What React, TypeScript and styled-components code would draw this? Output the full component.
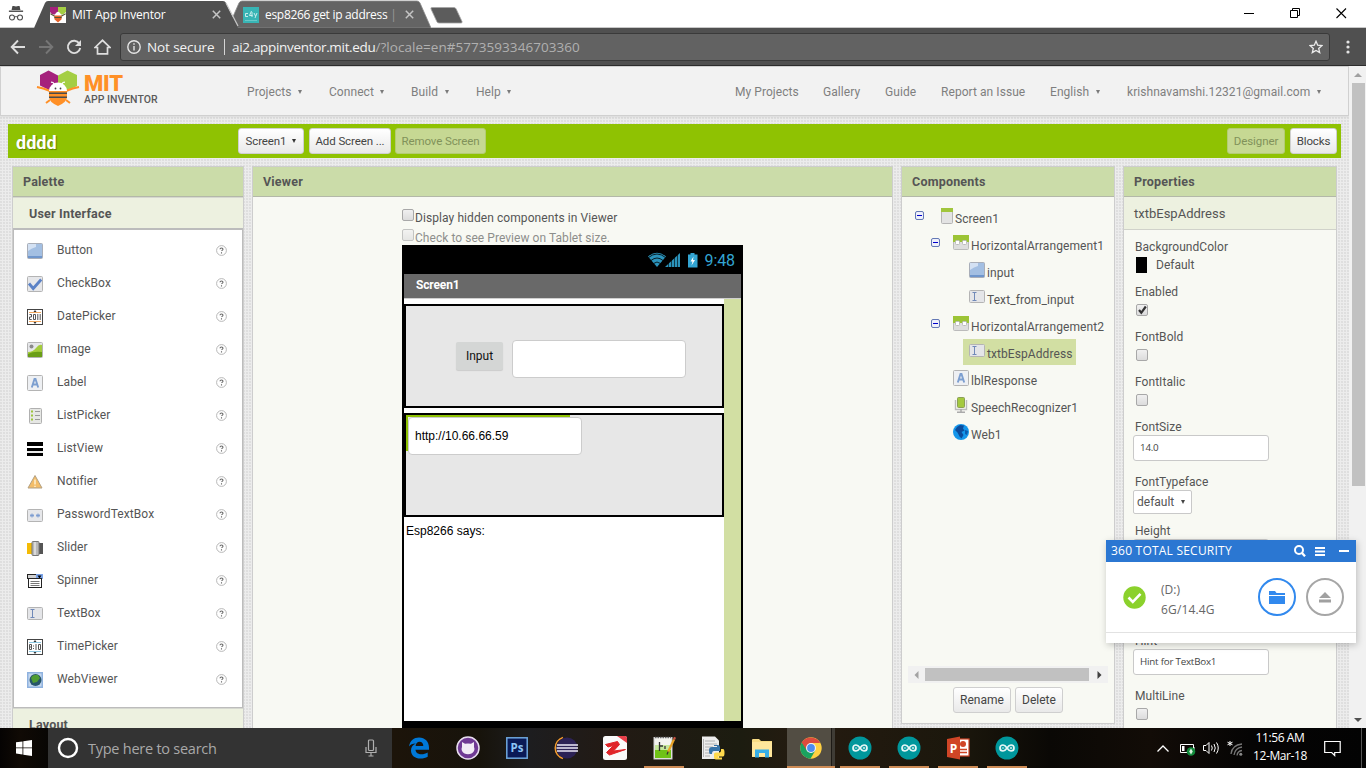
import React from "react";
import styled, { createGlobalStyle, css } from "styled-components";

const Global = createGlobalStyle`
  * { box-sizing: border-box; }
  html, body { margin: 0; padding: 0; overflow: hidden; }
  body { font-family: Roboto, "Liberation Sans", sans-serif; font-size: 12px; color: #555; }
`;

const SEGOE = `"Open Sans", "Noto Sans", sans-serif`;

/* ---------- shared ---------- */

const Screen = styled.div`
  width: 1366px;
  height: 768px;
  display: flex;
  flex-direction: column;
  overflow: hidden;
  position: relative;
  background: #fff;
`;

const Txt = styled.span<{ $ls?: number; $color?: string; $w?: number; $ml?: number; $grow?: boolean }>`
  white-space: nowrap;
  letter-spacing: ${(p) => p.$ls ?? 0}px;
  ${(p) => p.$color && css`color: ${p.$color};`}
  ${(p) => p.$w && css`width: ${p.$w}px;`}
  ${(p) => p.$ml && css`margin-left: ${p.$ml}px;`}
  ${(p) => p.$grow && css`flex: 1;`}
`;

const Glyph = styled.svg<{ $ml?: string; $mr?: number; $mt?: number }>`
  flex: none;
  margin-left: ${(p) => p.$ml ?? "0"};
  margin-right: ${(p) => p.$mr ?? 0}px;
  margin-top: ${(p) => p.$mt ?? 0}px;
`;

/* ---------- browser chrome ---------- */

const TabStrip = styled.div`
  height: 28px;
  flex: none;
  display: flex;
  background: #fff;
  position: relative;
  font-family: ${SEGOE};
`;

const TabShapes = styled.svg`
  position: absolute;
  left: 0;
  top: 0;
`;

const Incognito = styled.div`
  width: 34px;
  height: 28px;
  position: relative;
  display: flex;
  justify-content: center;
  padding: 3px 2px 0 0;
`;

const Tab = styled.div<{ $w: number; $pl: number }>`
  width: ${(p) => p.$w}px;
  padding-left: ${(p) => p.$pl}px;
  height: 28px;
  display: flex;
  align-items: center;
  position: relative;
  padding-top: 1px;
  color: #fff;
  font-size: 12px;
  svg { flex: none; }
`;

const TabTitle = styled.div<{ $w: number; $ls: number }>`
  width: ${(p) => p.$w}px;
  flex: none;
  margin-left: 6px;
  white-space: nowrap;
  overflow: hidden;
  letter-spacing: ${(p) => p.$ls}px;
  span { color: #9a9a9a; }
`;

const WindowButtons = styled.div`
  margin-left: auto;
  display: flex;
  gap: 35px;
  padding: 7px 19px 0 0;
  position: relative;
`;

const Toolbar = styled.div`
  height: 38px;
  flex: none;
  display: flex;
  align-items: center;
  background: #505050;
  border-bottom: 1px solid #2d2d2d;
  padding-left: 10px;
  font-family: ${SEGOE};
`;

const ToolIcons = styled.div`
  width: 110px;
  display: flex;
  gap: 12px;
`;

const Address = styled.div`
  width: 1210px;
  height: 28px;
  border: 1px solid #3a3a3a;
  border-radius: 3px;
  background: #626262;
  display: flex;
  align-items: center;
  padding: 0 6px 0 6px;
  color: #f3f3f3;
  font-size: 13.5px;
`;

const AddressSplit = styled.i`
  width: 1px;
  height: 16px;
  background: #d5d5d5;
  margin: 0 7px 0 0;
`;

/* ---------- page ---------- */

const Page = styled.div`
  height: 662px;
  flex: none;
  display: flex;
`;

const Canvas = styled.div`
  width: 1349px;
  display: flex;
  flex-direction: column;
  background-color: #ececec;
  background-image: radial-gradient(circle at 1px 1px, #dedede 0.7px, transparent 1px);
  background-size: 3px 3px;
`;

const Header = styled.div`
  height: 50px;
  flex: none;
  background: #f2f2f2;
  border: 1px solid #d0d0d0;
  display: flex;
  box-shadow: 0 1px 2px rgba(0, 0, 0, 0.08);
`;

const Brand = styled.div`
  width: 246px;
  padding: 2px 0 0 35px;
  display: flex;
`;

const BrandText = styled.div`
  display: flex;
  flex-direction: column;
  padding: 4px 0 0 4px;
  b {
    color: #ff9027;
    font-size: 22px;
    line-height: 21px;
    font-weight: 900;
    letter-spacing: -0.2px;
  }
  span {
    color: #5b5b5b;
    font-weight: 500;
    font-size: 10.5px;
    line-height: 12px;
    white-space: nowrap;
    letter-spacing: 0;
  }
`;

const Nav = styled.div<{ $cols: string }>`
  display: grid;
  grid-template-columns: ${(p) => p.$cols};
  align-items: center;
  color: #7f7f7f;
  font-size: 12px;
  padding-top: 1px;
`;

const NavItem = styled.div`
  display: flex;
  align-items: center;
  white-space: nowrap;
  letter-spacing: 0.06px;
`;

const Caret = styled.i<{ $ml?: number; $c?: string }>`
  border: 2.5px solid transparent;
  border-top: 4px solid ${(p) => p.$c ?? "#7a7a7a"};
  border-bottom: 0;
  margin-left: ${(p) => p.$ml ?? 6.5}px;
`;

const ProjectBar = styled.div`
  height: 34px;
  flex: none;
  margin: 8px 8px 0 8px;
  padding: 4px 4px 4px 8px;
  background: #8fc202;
  display: flex;
`;

const ProjectName = styled.div`
  width: 222px;
  color: #fff;
  font-size: 18px;
  line-height: 29px;
  font-weight: 700;
  text-shadow: 1px 1px 1px rgba(0, 0, 0, 0.35);
`;

const Btn = styled.div<{ $w: number; $off?: boolean; $mr?: number; $ml?: string; $size?: number }>`
  width: ${(p) => p.$w}px;
  height: 26px;
  flex: none;
  margin-right: ${(p) => p.$mr ?? 0}px;
  margin-left: ${(p) => p.$ml ?? "0"};
  border-radius: 3px;
  border: 1px solid ${(p) => (p.$off ? "#b4cc74" : "#cfcfcf")};
  background: ${(p) => (p.$off ? "#c6d893" : "linear-gradient(#ffffff, #e9e9e9)")};
  color: ${(p) => (p.$off ? "#81925a" : "#444")};
  font-size: ${(p) => p.$size ?? 11.5}px;
  letter-spacing: ${(p) => (p.$size ? 0 : -0.1)}px;
  display: flex;
  align-items: center;
  justify-content: center;
  white-space: nowrap;
  padding-bottom: ${(p) => (p.$size ? 0 : 1)}px;
`;

const Panels = styled.div`
  flex: 1;
  min-height: 0;
  display: flex;
  padding: 8px 0 0 12px;
  align-items: flex-start;
`;

const Panel = styled.div<{ $w: number; $mr?: number; $h?: number }>`
  width: ${(p) => p.$w}px;
  height: ${(p) => p.$h ?? 562}px;
  flex: none;
  margin-right: ${(p) => p.$mr ?? 0}px;
  border: 1px solid #cdcdcd;
  ${(p) => !p.$h && css`border-bottom: 0;`}
  background: #f8f9f3;
  display: flex;
  flex-direction: column;
  overflow: hidden;
`;

const PanelTitle = styled.div`
  height: 30px;
  flex: none;
  background: #cbdca9;
  border-bottom: 1px solid #b3b8a8;
  padding-left: 10px;
  line-height: 29px;
  font-size: 12.5px;
  font-weight: 700;
  color: #555;
  letter-spacing: 0.2px;
`;

const Category = styled.div`
  height: 31px;
  flex: none;
  background: #edf1e0;
  border-top: 1px solid #d6d8d0;
  padding-left: 16px;
  line-height: 32px;
  font-size: 12.5px;
  font-weight: 700;
  letter-spacing: 0.2px;
`;

const PaletteList = styled.div`
  height: 480px;
  flex: none;
  background: #fff;
  border: 1px solid #bcbcbc;
  border-width: 2px 1px 1px 1px;
  padding: 4px 15px 0 13px;
`;

const PaletteRow = styled.div`
  height: 33px;
  display: flex;
  align-items: center;
`;

const PaletteName = styled.span`
  flex: 1;
  padding: 0 0 2px 14px;
  letter-spacing: 0.08px;
`;

/* ---------- viewer ---------- */

const ViewerBody = styled.div`
  padding: 11px 0 0 149px;
  display: flex;
  flex-direction: column;
`;

const CheckLine = styled.div<{ $off?: boolean }>`
  height: 20px;
  display: flex;
  align-items: flex-start;
  line-height: 20px;
  opacity: ${(p) => (p.$off ? 0.65 : 1)};
`;

const Box = styled.i<{ $mt?: number }>`
  width: 12px;
  height: 12px;
  margin-top: ${(p) => p.$mt ?? 0}px;
  margin-right: 1px;
  flex: none;
  border: 1px solid #a8a8a8;
  border-radius: 2px;
  background: linear-gradient(#f0f0f0, #dcdcdc);
  display: block;
`;

const Phone = styled.div`
  width: 341px;
  height: 483px;
  margin-top: -3px;
  border: 2px solid #000;
  border-width: 0 2px 7px 2px;
  display: flex;
  flex-direction: column;
  background: #fff;
`;

const StatusBar = styled.div`
  height: 29px;
  flex: none;
  background: #000;
  display: flex;
  align-items: center;
  justify-content: flex-end;
  padding: 1px 6px 0 0;
  color: #33a5d3;
  font-size: 16px;
`;

const ScreenTitle = styled.div`
  height: 25px;
  flex: none;
  background: #696969;
  border-bottom: 1px solid #cfcfcf;
  color: #fff;
  font-weight: 700;
  font-size: 12px;
  line-height: 22px;
  letter-spacing: -0.15px;
  padding-left: 12px;
`;

const FormArea = styled.div`
  flex: 1;
  border-right: 17px solid #d2dfa3;
  display: flex;
  flex-direction: column;
  padding-top: 5px;
`;

const Arrangement = styled.div<{ $mb: number; $pad: string }>`
  height: 104px;
  flex: none;
  border: 2px solid #000;
  background: #e7e7e7;
  margin-bottom: ${(p) => p.$mb}px;
  padding: ${(p) => p.$pad};
  display: flex;
  align-items: flex-start;
`;

const MockButton = styled.div`
  width: 47px;
  height: 28px;
  margin: 2px 9px 0 0;
  background: #d4d6d5;
  border-radius: 2px;
  box-shadow: 0 1px 1px rgba(0, 0, 0, 0.12);
  color: #111;
  text-align: center;
  line-height: 28px;
`;

const MockInput = styled.div`
  width: 174px;
  height: 38px;
  background: #fff;
  border: 1px solid #ccc;
  border-radius: 4px;
  color: #000;
  font: 12px/36px "Liberation Sans", sans-serif;
  padding-left: 6px;
`;

const Selected = styled.div`
  width: 164px;
  height: 36px;
  border-top: 2px solid #8fc202;
  border-left: 2px solid #8fc202;
`;

const SaysLabel = styled.div`
  color: #000;
  font: 12px/18px "Liberation Sans", sans-serif;
  padding: 5px 0 0 2px;
`;

/* ---------- components tree ---------- */

const Tree = styled.div`
  height: 469px;
  flex: none;
  padding-top: 8px;
`;

const TreeRow = styled.div<{ $indent: number; $toggle?: boolean }>`
  height: 27px;
  display: flex;
  align-items: flex-start;
  padding-left: ${(p) => p.$indent - (p.$toggle ? 22 : 0)}px;
`;

const Toggle = styled.i`
  width: 9px;
  height: 9px;
  margin: 6px 13px 0 0;
  flex: none;
  border: 1px solid #6479b5;
  border-radius: 2px;
  background: linear-gradient(#00c, #00c) center / 5px 1px no-repeat #eef0fb;
`;

const TreeItem = styled.div<{ $sel?: boolean }>`
  height: 26px;
  margin-left: -6px;
  padding: 1px 4px 0 6px;
  margin-top: -1px;
  display: flex;
  align-items: flex-start;
  background: ${(p) => (p.$sel ? "#d2dfa3" : "transparent")};
  svg { flex: none; margin-top: 3px; }
  span { line-height: 29px; padding-left: 2px; white-space: nowrap; letter-spacing: 0.08px; }
`;

const HScroll = styled.div`
  height: 17px;
  flex: none;
  margin: 0 6px 0 6px;
  background: #f1f1f1;
  display: flex;
  align-items: center;
  justify-content: space-between;
  padding: 0 6px;
  i { width: 164px; height: 13px; background: #c1c1c1; margin-right: 3px; }
`;

const ButtonsRow = styled.div`
  display: flex;
  padding: 4px 0 0 51px;
  gap: 4px;
`;

/* ---------- properties ---------- */

const PropHead = styled.div`
  height: 33px;
  flex: none;
  background: #edf1e0;
  border-bottom: 1px solid #d0d2ca;
  line-height: 33px;
  padding-left: 10px;
  font-size: 13px;
  margin-bottom: 7px;
`;

const Prop = styled.div<{ $h: number }>`
  height: ${(p) => p.$h}px;
  flex: none;
  padding-left: 11px;
  display: flex;
  flex-direction: column;
  align-items: flex-start;
`;

const PropLabel = styled.div`
  height: 18px;
  flex: none;
  line-height: 21px;
  letter-spacing: 0.05px;
`;

const Field = styled.div`
  width: 136px;
  height: 26px;
  flex: none;
  margin-left: -2px;
  background: #fff;
  border: 1px solid #c9c9c9;
  border-radius: 3px;
  font-size: 9.8px;
  line-height: 24px;
  padding-left: 6px;
  font-family: ${SEGOE};
  letter-spacing: -0.22px;
  color: #444;
`;

const Select = styled.div`
  width: 59px;
  height: 24px;
  margin-left: -2px;
  background: #fff;
  border: 1px solid #c9c9c9;
  border-radius: 2px;
  display: flex;
  align-items: center;
  padding-left: 3px;
`;

const ColorRow = styled.div`
  display: flex;
  align-items: center;
  height: 19px;
  i { width: 11px; height: 16px; background: #000; margin: 1px 9px 0 1px; }
`;

const CheckCell = styled.div`
  position: relative;
  margin: 4px 0 0 1px;
  height: 12px;
  svg { position: absolute; left: 1px; top: 0; }
`;

const VScroll = styled.div`
  width: 17px;
  height: 662px;
  background: #f1f1f1;
  display: flex;
  flex-direction: column;
  align-items: center;
  justify-content: space-between;
  padding: 7px 0 6px 0;
  i { width: 13px; height: 403px; background: #c1c1c1; margin: 6px 0 auto 1px; }
`;

/* ---------- popup ---------- */

const Popup = styled.div`
  position: absolute;
  left: 1106px;
  top: 540px;
  width: 250px;
  height: 103px;
  background: #fff;
  box-shadow: 1px 2px 7px rgba(0, 0, 0, 0.22);
  font-family: ${SEGOE};
`;

const PopupHead = styled.div`
  height: 22px;
  background: #2b77d2;
  color: #fff;
  display: flex;
  align-items: center;
  padding: 0 7px 0 5px;
  font-size: 12px;
  > span { margin-top: -2px; }
`;

const PopupBody = styled.div`
  height: 71px;
  border-bottom: 1px solid #e2e2e2;
  display: flex;
  align-items: center;
  padding: 0 12px 0 17px;
`;

const DriveText = styled.div`
  flex: 1;
  padding: 6px 0 0 15px;
  display: flex;
  flex-direction: column;
  font-size: 12px;
  line-height: 20px;
  color: #666;
`;

const Ring = styled.div<{ $c: string; $ml?: number }>`
  width: 38px;
  height: 38px;
  border-radius: 50%;
  border: 2px solid ${(p) => p.$c};
  margin-left: ${(p) => p.$ml ?? 0}px;
  display: flex;
  align-items: center;
  justify-content: center;
`;

/* ---------- taskbar ---------- */

const Taskbar = styled.div`
  height: 40px;
  flex: none;
  display: flex;
  font-family: ${SEGOE};
  background: linear-gradient(90deg, #050302 0, #100a05 20px, #080604 48px, #1c140a 395px, #17130b 480px, #1d1d1f 530px, #221a14 610px, #1c1c10 740px, #251b10 800px, #1b170c 960px, #0a0805 1050px, #120c07 1150px, #050404 1250px, #030303 1366px);
`;

const Start = styled.div`
  width: 48px;
  display: flex;
  align-items: center;
  justify-content: center;
`;

const Search = styled.div`
  width: 344px;
  background: #333;
  display: flex;
  align-items: center;
  padding: 0 15px 0 9px;
  color: #a9a9a9;
  font-size: 14.5px;
  > span { flex: 1; padding: 0 0 0 9px; }
`;

const Apps = styled.div`
  display: flex;
  margin-left: 2px;
`;

const AppSlot = styled.div<{ $line?: boolean; $active?: boolean }>`
  width: 49px;
  height: 40px;
  display: flex;
  align-items: center;
  justify-content: center;
  ${(p) =>
    p.$line &&
    css`
      background: linear-gradient(#cd8b55, #cd8b55) 5px 100% / 40px 2px no-repeat;
    `}
  ${(p) =>
    p.$active &&
    css`
      background: linear-gradient(#cd8b55, #cd8b55) 1px 100% / 48px 2px no-repeat,
        linear-gradient(90deg, transparent 1px, #524d43 1px 45px, #1d1a15 45px 46px, #3f3c35 46px 49px);
    `}
`;

const Tray = styled.div`
  margin-left: auto;
  display: flex;
  align-items: center;
  color: #fff;
`;

const Clock = styled.div`
  width: 70px;
  margin-left: 1px;
  text-align: center;
  font-size: 12px;
  line-height: 18px;
  letter-spacing: -0.4px;
  padding-bottom: 2px;
`;

const DesktopEdge = styled.i`
  width: 5px;
  height: 40px;
  border-left: 1px solid #555;
  margin-left: 20px;
`;

/* ---------- drawings ---------- */

const Bee = ({ w, h }: { w: number; h: number }) => (
  <svg width={w} height={h} viewBox="0 0 44 38">
    <path d="M4 6 12.500 1.500 22 6.500v11l-8 4-10-5z" fill="#a5217c" />
    <path d="M22 6.500 31.500 1.500 41 6v11l-9 4.500-10-4z" fill="#a4ce43" />
    <path d="M1 18q6 1 13 4M43 18q-6 1-13 4" stroke="#ff9027" strokeWidth="2.200" fill="none" />
    <path d="M13 22a9 8.500 0 0 1 18 0z" fill="#fff" />
    <path d="M18 15l-1-1.500-2-.3M26 15l1-1.500 2-.3" stroke="#fff" strokeWidth="1.200" fill="none" />
    <circle cx="19.500" cy="19.500" r=".9" fill="#444" />
    <circle cx="24.500" cy="19.500" r=".9" fill="#444" />
    <path d="M13 22h18v6q0 5-9 9-9-4-9-9z" fill="#ff9027" />
    <path d="M13 24.200h18M13 28.200h18" stroke="#4b4b4b" strokeWidth="1.600" />
    <path d="M14 31l-4 3M30 31l4 3" stroke="#ff9027" strokeWidth="2" />
  </svg>
);

const Close = () => (
  <svg width="9" height="9" viewBox="0 0 9 9" stroke="#c4c4c4" strokeWidth="1.5">
    <path d="M.8.8l7.400 7.400M8.200.8L.8 8.200" />
  </svg>
);

const Help = () => (
  <svg width="11" height="11" viewBox="0 0 11 11">
    <circle cx="5.500" cy="5.500" r="4.900" fill="#fff" stroke="#b0b0b0" strokeWidth=".9" />
    <path d="M4 4.300q0-1.300 1.500-1.300T7 4.300q0 .8-1.500 1.500M5.500 7.200v1.200" stroke="#666" strokeWidth="1.100" fill="none" />
  </svg>
);

type IconName =
  | "button" | "check" | "date" | "image" | "label" | "listpicker" | "listview" | "notifier"
  | "password" | "slider" | "spinner" | "textbox" | "time" | "web" | "screen" | "harr" | "mic" | "globe";

const frame = <rect x=".5" y=".5" width="15" height="15" rx="1" fill="#e6e7ea" stroke="#b4b4b4" />;

const art: Record<IconName, React.ReactNode> = {
  button: (
    <>
      <rect x=".5" y=".5" width="15" height="15" rx="1" fill="#a3bfe2" stroke="#a9aeb8" />
      <path d="M1 1h8v3q-4 1-8 4z" fill="#d3e1f3" />
      <path d="M1 13h14v2H1z" fill="#6f96cc" />
    </>
  ),
  check: (
    <>
      {frame}
      <path d="M2 7.500l4.200 5 8-9" stroke="#5b82c6" strokeWidth="2.800" fill="none" />
    </>
  ),
  date: (
    <>
      <rect x=".5" y=".5" width="15" height="15" fill="#fff" stroke="#444" />
      <path d="M2 3.500h12M2 12.500h12" stroke="#f0a860" />
      <path d="M6.500 3L8 1l1.500 2zM6.500 13L8 15l1.500-2z" fill="#333" />
      <path d="M2.500 5.500h2v2.500h-2v2.500h2.200M6.500 5.500h2v5h-2zM10.800 5v6M13.200 5v6" stroke="#555" fill="none" />
    </>
  ),
  image: (
    <>
      {frame}
      <circle cx="4.500" cy="4.500" r="2" fill="#8b8b8b" />
      <path d="M1 10q5 0 8-4t6-3v12H1z" fill="#a4cc3c" />
      <path d="M1 12q5-3 14-2v5H1z" fill="#6a9e17" />
    </>
  ),
  label: (
    <>
      <rect x=".5" y=".5" width="15" height="15" rx="1" fill="#eef0f3" stroke="#b4b4b4" />
      <path d="M4.800 12.500L7.500 4h1l2.700 8.500M5.800 9.500h4.400" stroke="#7d9fd0" strokeWidth="1.900" fill="none" />
    </>
  ),
  listpicker: (
    <>
      <rect x="2.500" y=".5" width="12" height="15" rx="1" fill="#e6e7e4" stroke="#b0b0b0" />
      <path d="M4 3.500h2M4 7.500h2M4 11.500h2" stroke="#9cc43c" strokeWidth="2" />
      <path d="M8 3.500h5M8 7.500h5M8 11.500h5" stroke="#999" />
    </>
  ),
  listview: (
    <>
      <path d="M0 1h16v4H0zM0 7h16v3H0zM0 12h16v3H0z" fill="#000" />
      <path d="M0 11h16" stroke="#aaa" strokeWidth=".5" />
    </>
  ),
  notifier: (
    <>
      <path d="M8 1.500L15 14H1z" fill="#f3bd68" stroke="#b3a184" />
      <path d="M8 5.500v5M8 11.800v1.200" stroke="#fff4d8" strokeWidth="1.400" />
    </>
  ),
  password: (
    <>
      <rect x=".5" y="2.500" width="15" height="12" rx="1" fill="#e6e7ea" stroke="#b4b4b4" />
      <path d="M5 6.500v4M3 8.500h4M3.500 7l3 3M6.500 7l-3 3M11 6.500v4M9 8.500h4M9.500 7l3 3M12.500 7l-3 3" stroke="#7b9bd0" strokeWidth=".9" />
    </>
  ),
  slider: (
    <>
      <path d="M0 3h6v11H0z" fill="#f4bb05" />
      <path d="M11 3h5v11h-5z" fill="#555" />
      <rect x="5" y="1.500" width="7" height="14" rx="1" fill="#b9b9b9" stroke="#777" />
      <path d="M8 2v13" stroke="#e6e6e6" strokeWidth="1.500" />
    </>
  ),
  spinner: (
    <>
      <rect x=".5" y="1.500" width="15" height="4" fill="#d0d0d0" stroke="#222" />
      <rect x="9" y="1" width="7" height="5" fill="#7ba4e8" />
      <path d="M10.500 2.500h4l-2 3z" fill="#000" />
      <rect x="1.500" y="5.500" width="13" height="9" fill="#fff" stroke="#222" />
      <path d="M3.500 8.500h9M3.500 10.500h9M3.500 12.500h9" stroke="#777" />
    </>
  ),
  textbox: (
    <>
      <rect x=".5" y="1.500" width="15" height="12" rx="1" fill="#e4e5e8" stroke="#b4b4b4" />
      <path d="M3.500 3.500h4M3.500 11.500h4M5.500 3.500v8" stroke="#7089b8" />
    </>
  ),
  time: (
    <>
      <rect x=".5" y=".5" width="15" height="15" fill="#fff" stroke="#444" />
      <path d="M2 3.500h12M2 12.500h12" stroke="#8cc6e0" />
      <path d="M6.500 3L8 1l1.500 2zM6.500 13L8 15l1.500-2z" fill="#333" />
      <path d="M2.500 5.500h2v5h-2zM2.500 8h2M6.500 6.500v1M6.500 9v1M9 5v6M11.500 5.500h2v5h-2z" stroke="#555" fill="none" />
    </>
  ),
  web: (
    <>
      <rect width="16" height="16" fill="#8fb2df" />
      <rect x="1.500" y="1.500" width="13" height="13" fill="#c5d8ef" />
      <circle cx="8.500" cy="8" r="6" fill="#27556b" />
      <path d="M4 6q2-4 7-3l2 3-3 4-4 1z" fill="#4f9c32" />
    </>
  ),
  screen: (
    <>
      <rect x="4.500" y=".5" width="11" height="15" rx="1" fill="#e3e3e3" stroke="#b5b5b5" />
      <path d="M4 0h12v4H4z" fill="#a1c63d" />
    </>
  ),
  harr: (
    <>
      <rect x=".5" y=".5" width="15" height="14" rx="1" fill="#dedede" stroke="#bbb" />
      <path d="M0 0h16v7H0z" fill="#9cc435" />
      <rect x="2.500" y="5.500" width="4" height="4" rx="1" fill="#fff" stroke="#bbb" />
      <rect x="9.500" y="5.500" width="4" height="4" rx="1" fill="#fff" stroke="#bbb" />
    </>
  ),
  mic: (
    <>
      <path d="M2.500 3v9.500h11V3" stroke="#bcbcbc" strokeWidth="1.400" fill="none" />
      <rect x="4.500" y=".5" width="7" height="10" rx="1" fill="#a4c93f" stroke="#8b9f56" />
      <path d="M8 12v3M4 15.200h8" stroke="#aaa" strokeWidth="1.500" />
    </>
  ),
  globe: (
    <>
      <circle cx="8" cy="8" r="8" fill="#1496ea" />
      <path d="M7 1l4 .5-1 3 1.500 2-3 1.500 2 3-2 3.500-2-2-2-4-2.500-2.500 2-3z" fill="#0c4c9c" />
      <path d="M12 6l3 1-1 4-2-1z" fill="#0c5cb0" />
    </>
  ),
};

const Icon = ({ name }: { name: IconName }) => (
  <svg width="16" height="16" viewBox="0 0 16 16">{art[name]}</svg>
);

const palette: [IconName, string][] = [
  ["button", "Button"], ["check", "CheckBox"], ["date", "DatePicker"], ["image", "Image"],
  ["label", "Label"], ["listpicker", "ListPicker"], ["listview", "ListView"], ["notifier", "Notifier"],
  ["password", "PasswordTextBox"], ["slider", "Slider"], ["spinner", "Spinner"], ["textbox", "TextBox"],
  ["time", "TimePicker"], ["web", "WebViewer"],
];

const tree: { icon: IconName; name: string; indent: number; toggle?: boolean; sel?: boolean }[] = [
  { icon: "screen", name: "Screen1", indent: 35, toggle: true },
  { icon: "harr", name: "HorizontalArrangement1", indent: 51, toggle: true },
  { icon: "button", name: "input", indent: 67 },
  { icon: "textbox", name: "Text_from_input", indent: 67 },
  { icon: "harr", name: "HorizontalArrangement2", indent: 51, toggle: true },
  { icon: "textbox", name: "txtbEspAddress", indent: 67, sel: true },
  { icon: "label", name: "lblResponse", indent: 51 },
  { icon: "mic", name: "SpeechRecognizer1", indent: 51 },
  { icon: "globe", name: "Web1", indent: 51 },
];

const Arduino = () => (
  <svg width="24" height="24" viewBox="0 0 24 24">
    <circle cx="12" cy="12" r="11.500" fill="#00979c" />
    <path d="M12 12c-1.500-2.200-2.500-3-4-3a3 3 0 0 0 0 6c1.500 0 2.500-.8 4-3s2.500-3 4-3a3 3 0 0 1 0 6c-1.500 0-2.500-.8-4-3z" fill="none" stroke="#e8f7f7" strokeWidth="1.700" />
    <path d="M6.800 12h2.400M14.800 12h2.400M16 10.800v2.400" stroke="#e8f7f7" strokeWidth=".9" />
  </svg>
);

const Edge = () => (
  <svg width="22" height="22" viewBox="0 0 22 22">
    <path d="M1 9.500C2 3.500 6 .5 11 .5c6 0 10 4.200 10 10v2.300H7.500c.2 3 2.700 4.500 5.800 4.500 2.400 0 4.400-.6 6.400-1.800v4.300c-2 1.200-4.400 1.800-7.200 1.800C7 21.600 3 18.500 3 13.500c0-3 1.700-5.700 4.800-7C4.500 6.500 2.300 7.800 1 9.500zM7.600 9h7.700c0-2.600-1.300-4.200-3.700-4.200S7.900 6.400 7.600 9z" fill="#0078d7" />
  </svg>
);

const Github = () => (
  <svg width="24" height="24" viewBox="0 0 24 24">
    <circle cx="12" cy="12" r="11" fill="#6f3a94" stroke="#e9dff0" strokeWidth="1.500" />
    <path d="M6 6l3 1.800q3-.8 6 0L18 6v5q1 2 0 4-2 3.300-6 3.300T6 15q-1-2 0-4z" fill="#f2ecf6" />
  </svg>
);

const Photoshop = () => (
  <svg width="22" height="22" viewBox="0 0 22 22">
    <rect x=".8" y=".8" width="20.400" height="20.400" fill="#0a1a56" stroke="#6ea7de" strokeWidth="1.500" />
    <text x="11" y="15" fontSize="11.500" fontWeight="700" fontFamily="Open Sans, sans-serif" fill="#8cc4f4" textAnchor="middle">Ps</text>
  </svg>
);

const Eclipse = () => (
  <svg width="24" height="24" viewBox="0 0 24 24">
    <path d="M9 1.500A11 11 0 0 0 9 22.500" stroke="#f29a2e" strokeWidth="1.600" fill="none" />
    <circle cx="13" cy="12" r="10.500" fill="#2c2255" />
    <path d="M3 9h21M2.500 12h22M3 15h21" stroke="#ece9f6" strokeWidth="1.500" />
  </svg>
);

const Zapya = () => (
  <svg width="24" height="24" viewBox="0 0 24 24">
    <rect width="24" height="24" rx="2.500" fill="#fafafa" />
    <path d="M14 0h8q2 0 2 2v5z" fill="#e8404a" />
    <path d="M2.500 8.500l12-3 2 3-6 6.500 12-1.500-16 5.500-3-2.500 7-7-5.500 1.500z" fill="#e02429" stroke="#e02429" />
  </svg>
);

const Notepad = () => (
  <svg width="24" height="24" viewBox="0 0 24 24">
    <rect x="2" y="1.500" width="18" height="21.500" fill="#f3f3ee" stroke="#ccc" />
    <path d="M3 14h16v8H3z" fill="#6fc216" />
    <path d="M3 9h16v5H3z" fill="#c5e79a" />
    <path d="M3 1.500h16" stroke="#666" strokeWidth="1.500" strokeDasharray="1.500 1" />
    <path d="M7.500 6v9M8 10h3M13 10v3" stroke="#333" strokeWidth="1.300" />
    <path d="M22 3.500L16 16" stroke="#eaa326" strokeWidth="2.200" fill="none" />
    <path d="M16.200 15.500L15 18.500" stroke="#333" strokeWidth="1.200" />
    <path d="M23 1.200l-1 2.300" stroke="#c54" strokeWidth="2.200" />
  </svg>
);

const Python = () => (
  <svg width="24" height="24" viewBox="0 0 24 24">
    <path d="M1 .5h13l4 4V23H1z" fill="#ededed" />
    <path d="M2.500 3v18M4 5h10M4 8h12M4 11h8M4 14h5M4 17h5M4 20h5" stroke="#aaa" strokeWidth=".9" />
    <path d="M13 9h4q2 0 2 2v4h-6q-2 0-2 3H9q-1 0-1-4 0-3 3-3h5v-1h-3z" fill="#3874a8" />
    <path d="M20 13h2q1.500 0 1.500 4t-2 3.500H17v1h4v2h-6q-2 0-2-2V18q0-1.500 2-1.500h3.500q1.500 0 1.500-2z" fill="#ffd94c" />
  </svg>
);

const Folder = () => (
  <svg width="22" height="22" viewBox="0 0 22 22">
    <path d="M1 3q0-1 1-1h6l2 2h11v16H1z" fill="#f8dc84" />
    <path d="M1 5h20v14.500H1z" fill="#ffe79c" />
    <path d="M4 20.500v-8h14v8h-4v-4.500H8v4.500z" fill="#37aee6" />
  </svg>
);

const Chrome = () => (
  <svg width="22" height="22" viewBox="0 0 22 22">
    <circle cx="11" cy="11" r="10.700" fill="#ffd042" />
    <path d="M1.700 5.600A10.700 10.700 0 0 0 10.500 21.700L15.300 13.500 11 11z" fill="#1aa260" />
    <path d="M1.700 5.600A10.700 10.700 0 0 1 20.300 6H11L6.500 13z" fill="#dd4b3e" />
    <circle cx="11" cy="11" r="5" fill="#f4f4f4" />
    <circle cx="11" cy="11" r="3.900" fill="#4d8cf0" />
  </svg>
);

const PowerPoint = () => (
  <svg width="24" height="24" viewBox="0 0 24 24">
    <rect x="11" y="3" width="12" height="17" fill="#fff" stroke="#d04526" strokeWidth="1.200" />
    <circle cx="17" cy="8" r="3" fill="#d04526" />
    <path d="M14 13.500h7M14 16.500h7" stroke="#d04526" strokeWidth="1.300" />
    <path d="M1 3l13-2.500v23L1 21z" fill="#d04526" />
    <text x="7.500" y="16.500" fontSize="12" fontWeight="700" fontFamily="Open Sans, sans-serif" fill="#fff" textAnchor="middle">P</text>
  </svg>
);

/* ---------- page assembly ---------- */

const BrowserTop = () => (
  <>
    <TabStrip>
      <TabShapes width="1366" height="28">
        <path d="M0 27.500H34" stroke="#c8c8c8" />
        <path d="M228 28h203L420 3q-1-2-3-2H242q-2 0-3 2z" fill="#646464" stroke="#888" strokeWidth=".8" />
        <path d="M34 28L45 3q1-2 3-2h175q2 0 3 2l12 25z" fill="#505050" />
        <path d="M226 3l12 23" stroke="#c8c8c8" strokeWidth="1.200" />
        <path d="M432 7.500h22q1.500 0 2.200 1.500l5.800 12.500q.6 1.500-1 1.500h-22q-1.500 0-2.200-1.500L431 9q-.6-1.500 1-1.500z" fill="#5c5c5c" stroke="#a5a5a5" strokeWidth=".8" />
        <path d="M431 27.500H1366" stroke="#c8c8c8" />
      </TabShapes>
      <Incognito>
        <svg width="16" height="20" viewBox="0 0 18 20">
          <path d="M5 2l1.500 0 2.500.7 2.500-.7H13l1 4.500H4z" fill="#4a4a4a" />
          <path d="M1 8h16" stroke="#4a4a4a" strokeWidth="1.600" />
          <circle cx="4.500" cy="15" r="2.800" fill="none" stroke="#4a4a4a" strokeWidth="1.200" />
          <circle cx="13.500" cy="15" r="2.800" fill="none" stroke="#4a4a4a" strokeWidth="1.200" />
          <path d="M7.300 14.500q1.700-1 3.400 0" stroke="#4a4a4a" fill="none" />
        </svg>
      </Incognito>
      <Tab $w={198} $pl={16}>
        <svg width="16" height="16" viewBox="0 0 44 38" preserveAspectRatio="none">
          <rect width="44" height="38" fill="#fff" />
          <path d="M0 0h22v18H6L0 12z" fill="#a5217c" />
          <path d="M22 0h22v12l-8 6H22z" fill="#a4ce43" />
          <path d="M12 20q10-18 20 0z" fill="#fff" />
          <path d="M12 20h20v9l-10 8-10-8z" fill="#e8622a" />
          <path d="M12 25h20M1 16l12 6M43 16l-12 6" stroke="#553" strokeWidth="2.500" />
        </svg>
        <TabTitle $w={140} $ls={-0.18}>MIT App Inventor</TabTitle>
        <Close />
      </Tab>
      <Tab $w={200} $pl={11}>
        <svg width="16" height="16" viewBox="0 0 16 16">
          <rect width="16" height="16" fill="#38b5b5" />
          <path d="M5 6.500H2.500v3H5M8.500 4L6.500 8.500h3M9 5v5M11 6l1.500 3M14 6l-2 5" stroke="#d6f2f2" strokeWidth=".9" fill="none" />
          <path d="M2 13.500h12" stroke="#7fd0d0" strokeWidth=".7" />
        </svg>
        <TabTitle $w={140} $ls={-0.3}>esp8266 get ip address <span>|</span></TabTitle>
        <Close />
      </Tab>
      <WindowButtons>
        <svg width="11" height="12"><path d="M0 6.500h10" stroke="#000" /></svg>
        <svg width="11" height="12" fill="none" stroke="#000"><path d="M.5 3.500h7v7h-7zM2.500 3.500v-2h7v7h-2" /></svg>
        <svg width="11" height="12" stroke="#000" strokeWidth="1.100"><path d="M.5 1.500l9.500 9.500M10 1.500L.5 11" /></svg>
      </WindowButtons>
    </TabStrip>
    <Toolbar>
      <ToolIcons>
        <svg width="16" height="16" fill="none" stroke="#dedede" strokeWidth="1.900"><path d="M15 8H2M8 1.500L1.700 8 8 14.500" /></svg>
        <svg width="16" height="16" fill="none" stroke="#767676" strokeWidth="1.900"><path d="M1 8h13M8 1.500L14.300 8 8 14.500" /></svg>
        <svg width="16" height="16" fill="none" stroke="#dedede" strokeWidth="1.900"><path d="M13.300 4.500A6.200 6.200 0 1 0 14.200 9" /><path d="M15 1v6H9z" fill="#dedede" stroke="none" /></svg>
        <svg width="17" height="16" fill="none" stroke="#dedede" strokeWidth="1.700"><path d="M1 8.500L8.500 1.300 16 8.500h-2.500v6.300h-10V8.500z" /></svg>
      </ToolIcons>
      <Address>
        <Glyph width="14" height="14" fill="none" stroke="#e6e6e6" strokeWidth="1.400"><circle cx="7" cy="7" r="6.200" /><path d="M7 6v4.500M7 3.300v1.500" /></Glyph>
        <Txt $ml={6} $w={77} $ls={-0.1}>Not secure</Txt>
        <AddressSplit />
        <Txt $ls={-0.32}>ai2.appinventor.mit.edu</Txt>
        <Txt $ls={0.04} $color="#b0b0b0">/?locale=en#5773593346703360</Txt>
        <Glyph $ml="auto" width="14" height="14" viewBox="0 0 14 14"><path d="M7 1.300l1.700 3.900 4.200.4-3.200 2.800 1 4.200L7 10.400l-3.700 2.200 1-4.200L1.100 5.600l4.200-.4z" fill="none" stroke="#ececec" strokeWidth="1.300" /></Glyph>
      </Address>
      <Glyph $ml="16px" width="4" height="14" fill="#e4e4e4"><circle cx="2" cy="2" r="1.600" /><circle cx="2" cy="7" r="1.600" /><circle cx="2" cy="12" r="1.600" /></Glyph>
    </Toolbar>
  </>
);

const PropCheck = ({ label, on }: { label: string; on?: boolean }) => (
  <Prop $h={45}>
    <PropLabel>{label}</PropLabel>
    <CheckCell>
      <Box />
      {on && <svg width="11" height="11"><path d="M2 6l2.300 2.800L8.800 2.500" stroke="#333" strokeWidth="2.200" fill="none" /></svg>}
    </CheckCell>
  </Prop>
);

export default function App() {
  return (
    <Screen>
      <Global />
      <BrowserTop />
      <Page>
        <Canvas>
          <Header>
            <Brand>
              <Bee w={44} h={38} />
              <BrandText><b>MIT</b><span>APP INVENTOR</span></BrandText>
            </Brand>
            <Nav $cols="82px 82px 65px 259px">
              <NavItem>Projects<Caret /></NavItem>
              <NavItem>Connect<Caret /></NavItem>
              <NavItem>Build<Caret /></NavItem>
              <NavItem>Help<Caret /></NavItem>
            </Nav>
            <Nav $cols="88px 62px 56px 109px 77px 200px">
              <NavItem>My Projects</NavItem>
              <NavItem>Gallery</NavItem>
              <NavItem>Guide</NavItem>
              <NavItem>Report an Issue</NavItem>
              <NavItem>English<Caret /></NavItem>
              <NavItem>krishnavamshi.12321@gmail.com<Caret /></NavItem>
            </Nav>
          </Header>
          <ProjectBar>
            <ProjectName>dddd</ProjectName>
            <Btn $w={66} $mr={5}>Screen1<Caret $ml={6} $c="#333" /></Btn>
            <Btn $w={82} $mr={4}>Add Screen ...</Btn>
            <Btn $w={91} $off>Remove Screen</Btn>
            <Btn $w={58} $ml="auto" $mr={5} $off>Designer</Btn>
            <Btn $w={47}>Blocks</Btn>
          </ProjectBar>
          <Panels>
            <Panel $w={232} $mr={8}>
              <PanelTitle>Palette</PanelTitle>
              <Category>User Interface</Category>
              <PaletteList>
                {palette.map(([icon, name]) => (
                  <PaletteRow key={name}>
                    <Icon name={icon} />
                    <PaletteName>{name}</PaletteName>
                    <Help />
                  </PaletteRow>
                ))}
              </PaletteList>
              <Category>Layout</Category>
            </Panel>
            <Panel $w={641} $mr={8}>
              <PanelTitle>Viewer</PanelTitle>
              <ViewerBody>
                <CheckLine><Box $mt={1} /><Txt $ls={0.08}>Display hidden components in Viewer</Txt></CheckLine>
                <CheckLine $off><Box $mt={1} /><Txt $ls={0.05}>Check to see Preview on Tablet size.</Txt></CheckLine>
                <Phone>
                  <StatusBar>
                    <Glyph $mr={6} width="52" height="16" viewBox="0 0 52 16">
                      <path d="M1 4.500Q10-3 19 4.500L10 15z" fill="#2b93bb" />
                      <path d="M1.500 5.500q8.500-7 17 0M4 8.500q6-5 12 0M6.500 11.500q3.500-3 7 0" stroke="#000" strokeWidth=".8" fill="none" />
                      <path d="M18 15L33 1v14z" fill="#2b93bb" />
                      <path d="M21.500 8v7M24.500 6v9M27.500 3v12M30.500 1v14" stroke="#000" strokeWidth=".6" />
                      <path d="M41 2.500h2.500V1h4v1.500H50.500V15.500H41z" fill="#33a5d3" />
                      <path d="M46.500 4.500l-3 5h2l-1 4 3.500-5.500h-2z" fill="#fff" />
                    </Glyph>
                    <Txt $ls={-0.1}>9:48</Txt>
                  </StatusBar>
                  <ScreenTitle>Screen1</ScreenTitle>
                  <FormArea>
                    <Arrangement $mb={5} $pad="34px 0 0 50px">
                      <MockButton>Input</MockButton>
                      <MockInput />
                    </Arrangement>
                    <Arrangement $mb={0} $pad="0">
                      <Selected><MockInput>http://10.66.66.59</MockInput></Selected>
                    </Arrangement>
                    <SaysLabel>Esp8266 says:</SaysLabel>
                  </FormArea>
                </Phone>
              </ViewerBody>
            </Panel>
            <Panel $w={214} $mr={8} $h={558}>
              <PanelTitle>Components</PanelTitle>
              <Tree>
                {tree.map((t) => (
                  <TreeRow key={t.name} $indent={t.indent} $toggle={t.toggle}>
                    {t.toggle && <Toggle />}
                    <TreeItem $sel={t.sel}>
                      <Icon name={t.icon} />
                      <span>{t.name}</span>
                    </TreeItem>
                  </TreeRow>
                ))}
              </Tree>
              <HScroll>
                <svg width="5" height="8"><path d="M4.500 0v8L.5 4z" fill="#a3a3a3" /></svg>
                <i />
                <svg width="5" height="8"><path d="M.5 0v8L4.500 4z" fill="#404040" /></svg>
              </HScroll>
              <ButtonsRow>
                <Btn $w={58} $size={12}>Rename</Btn>
                <Btn $w={48} $size={12}>Delete</Btn>
              </ButtonsRow>
            </Panel>
            <Panel $w={214}>
              <PanelTitle>Properties</PanelTitle>
              <PropHead>txtbEspAddress</PropHead>
              <Prop $h={45}>
                <PropLabel>BackgroundColor</PropLabel>
                <ColorRow><i />Default</ColorRow>
              </Prop>
              <PropCheck label="Enabled" on />
              <PropCheck label="FontBold" />
              <PropCheck label="FontItalic" />
              <Prop $h={55}><PropLabel>FontSize</PropLabel><Field>14.0</Field></Prop>
              <Prop $h={49}><PropLabel>FontTypeface</PropLabel><Select>default<Caret $c="#444" $ml={7} /></Select></Prop>
              <Prop $h={110}><PropLabel>Height</PropLabel><Field /></Prop>
              <Prop $h={55}><PropLabel>Hint</PropLabel><Field>Hint for TextBox1</Field></Prop>
              <PropCheck label="MultiLine" />
            </Panel>
          </Panels>
        </Canvas>
        <VScroll>
          <svg width="8" height="4"><path d="M0 4h8L4 0z" fill="#a0a0a0" /></svg>
          <i />
          <svg width="8" height="4"><path d="M0 0h8L4 4z" fill="#505050" /></svg>
        </VScroll>
      </Page>
      <Taskbar>
        <Start>
          <svg width="16" height="16" fill="#fff"><path d="M0 2.300L6.500 1.400V7.500H0zM7.300 1.300L16 0v7.500H7.300zM0 8.300h6.500v6.200L0 13.600zM7.300 8.300H16V16l-8.700-1.300z" /></svg>
        </Start>
        <Search>
          <svg width="22" height="22"><circle cx="11" cy="11" r="9" fill="none" stroke="#fff" strokeWidth="2.400" /></svg>
          <Txt $ls={-0.25}>Type here to search</Txt>
          <svg width="12" height="18" fill="none" stroke="#b0b0b0" strokeWidth="1.200"><rect x="3.500" y="1" width="5" height="10.500" rx="1" /><path d="M1 8v5.500h10V8M6 13.500V17M3.500 17h5" /></svg>
        </Search>
        <Apps>
          <AppSlot><Edge /></AppSlot>
          <AppSlot><Github /></AppSlot>
          <AppSlot><Photoshop /></AppSlot>
          <AppSlot><Eclipse /></AppSlot>
          <AppSlot><Zapya /></AppSlot>
          <AppSlot $line><Notepad /></AppSlot>
          <AppSlot><Python /></AppSlot>
          <AppSlot><Folder /></AppSlot>
          <AppSlot $active><Chrome /></AppSlot>
          <AppSlot $line><Arduino /></AppSlot>
          <AppSlot $line><Arduino /></AppSlot>
          <AppSlot $line><PowerPoint /></AppSlot>
          <AppSlot $line><Arduino /></AppSlot>
        </Apps>
        <Tray>
          <Glyph width="12" height="7" fill="none" stroke="#fff" strokeWidth="1.300"><path d="M.5 6.500L6 1l5.500 5.500" /></Glyph>
          <Glyph $ml="11px" $mt={3} width="16" height="13">
            <path d="M.5 1.500h13v8H.5zM14 4v3" stroke="#fff" fill="none" />
            <path d="M2 3h2.500v5H2z" fill="#fff" />
            <circle cx="11" cy="8.500" r="4.300" fill="#11893a" />
            <path d="M11 5.500l1.800 3-1.800 3-1.800-3z" fill="#d9f3df" />
          </Glyph>
          <Glyph $ml="7px" width="17" height="14" fill="none" stroke="#fff">
            <path d="M.5 4.500h2.500L6 1.500v11L3 9.500H.5zM8.500 4.500q1.500 2.500 0 5M11 3q2.500 4 0 8M13.500 1.500q3.500 5.500 0 11" />
          </Glyph>
          <Glyph $ml="7px" width="17" height="17" fill="none">
            <path d="M3 1v5M.5 2.200l5 2.600M5.500 2.200l-5 2.600" stroke="#fff" />
            <path d="M4 14Q5 5 15 4M7 15q1-7 8-8M10 15.500q.5-4.500 5-5" stroke="#777" strokeWidth="1.300" />
            <circle cx="13.800" cy="14.300" r="1.500" fill="#888" />
          </Glyph>
          <Clock>11:56 AM<br />12-Mar-18</Clock>
          <Glyph $ml="9px" width="17" height="17" fill="none" stroke="#fff" strokeWidth="1.200"><path d="M.7 1.500h15.500v11h-5.500v3l-3-3h-7z" /></Glyph>
          <DesktopEdge />
        </Tray>
      </Taskbar>
      <Popup>
        <PopupHead>
          <Txt $grow $ls={0.22}>360 TOTAL SECURITY</Txt>
          <Glyph width="12" height="12" fill="none" stroke="#fff"><circle cx="5" cy="5" r="4" strokeWidth="2" /><path d="M8 8l3 3.300" strokeWidth="2.300" /></Glyph>
          <Glyph $ml="9px" width="10" height="9" stroke="#fff" strokeWidth="1.800"><path d="M0 1h10M0 4.500h10M0 8h10" /></Glyph>
          <Glyph $ml="14px" width="10" height="2"><path d="M0 1h10" stroke="#fff" strokeWidth="2" /></Glyph>
        </PopupHead>
        <PopupBody>
          <svg width="23" height="23"><circle cx="11.500" cy="11.500" r="11.200" fill="#8bd12c" /><path d="M5.500 11.500l4.300 4.300 7.700-8" stroke="#fff" strokeWidth="2.600" fill="none" /></svg>
          <DriveText><Txt>(D:)</Txt><Txt $ls={0.15}>6G/14.4G</Txt></DriveText>
          <Ring $c="#3189ee"><svg width="16" height="13" fill="#3189ee"><path d="M0 0h6l1.500 2H16v2H0zM0 5h16v8H0z" /></svg></Ring>
          <Ring $c="#a6a6a6" $ml={10}><svg width="12" height="11" fill="#a0a0a0"><path d="M6 0l6 6H0zM0 7.500h12v3H0z" /></svg></Ring>
        </PopupBody>
      </Popup>
    </Screen>
  );
}
